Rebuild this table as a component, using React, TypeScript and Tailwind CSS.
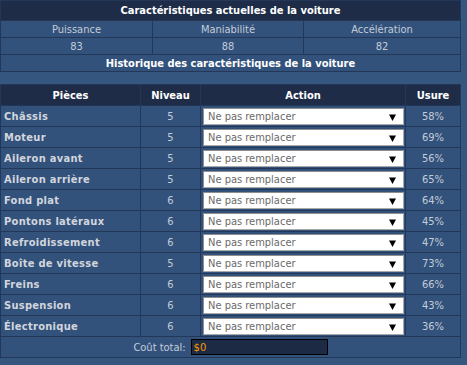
const parts: [string, number, number][] = [
  ["Châssis", 5, 58],
  ["Moteur", 5, 69],
  ["Aileron avant", 5, 56],
  ["Aileron arrière", 5, 65],
  ["Fond plat", 6, 64],
  ["Pontons latéraux", 6, 45],
  ["Refroidissement", 6, 47],
  ["Boîte de vitesse", 5, 73],
  ["Freins", 6, 66],
  ["Suspension", 6, 43],
  ["Électronique", 6, 36],
];

function ActionSelect() {
  return (
    <div className="ml-[2px] mt-[2px] flex h-[17px] w-[201px] items-center justify-between border border-[#a9a9a9] border-t-[#8f8f8f] border-l-[#8f8f8f] bg-white pl-[4px] pr-[7px] text-[11px] leading-none text-[#6a6a6a]">
      <span>Ne pas remplacer</span>
      <svg width="7" height="7" viewBox="0 0 7 7" className="mt-[1px]">
        <path d="M0 0.5 H7 L3.5 7 Z" fill="#000" />
      </svg>
    </div>
  );
}

export default function App() {
  return (
    <div
      className="h-[365px] w-[467px] bg-[#35567f] text-[11px] leading-none"
      style={{ fontFamily: '"DejaVu Sans Condensed", "DejaVu Sans", sans-serif' }}
    >
      {/* current stats */}
      <div className="grid w-[461px] grid-cols-[151px_150px_156px] gap-px bg-[#233858] p-px">
        <div className="col-span-3 flex h-[19px] items-center justify-center bg-[#1e2c47] font-bold text-white">
          Caractéristiques actuelles de la voiture
        </div>
        {["Puissance", "Maniabilité", "Accélération"].map((t) => (
          <div key={t} className="flex h-[16px] items-center justify-center bg-[#32527c] text-[#c3ccd8]">
            {t}
          </div>
        ))}
        {[83, 88, 82].map((v, i) => (
          <div key={i} className="flex h-[16px] items-center justify-center bg-[#32527c] text-[#c3ccd8]">
            {v}
          </div>
        ))}
        <div className="col-span-3 flex h-[16px] items-center justify-center bg-[#32527c] font-bold text-white">
          Historique des caractéristiques de la voiture
        </div>
      </div>

      {/* parts table */}
      <div className="mt-[12px] grid w-[461px] grid-cols-[139px_59px_204px_54px] gap-px bg-[#233858] p-px">
        {["Pièces", "Niveau", "Action", "Usure"].map((h) => (
          <div key={h} className="flex h-[20px] items-center justify-center bg-[#1e2c47] font-bold text-white">
            {h}
          </div>
        ))}
        {parts.map(([name, lvl, wear]) => (
          <div key={name} className="contents">
            <div className="flex h-[20px] items-center bg-[#32527c] pl-[3px] font-bold tracking-[0.3px] text-[#d2d6dc]">{name}</div>
            <div className="flex h-[20px] items-center justify-center bg-[#32527c] text-[#c3ccd8]">{lvl}</div>
            <div className="h-[20px] bg-[#32527c]">
              <ActionSelect />
            </div>
            <div className="flex h-[20px] items-center justify-center bg-[#32527c] text-[#c3ccd8]">{wear}%</div>
          </div>
        ))}
        <div className="col-span-4 flex h-[20px] items-center justify-center gap-[5px] bg-[#32527c] text-[#c3ccd8]">
          <span>Coût total:</span>
          <div className="flex h-[16px] w-[137px] items-center border border-black bg-[#1c2a44] pl-[2px] text-[#ff9900]">
            $0
          </div>
        </div>
      </div>
    </div>
  );
}
